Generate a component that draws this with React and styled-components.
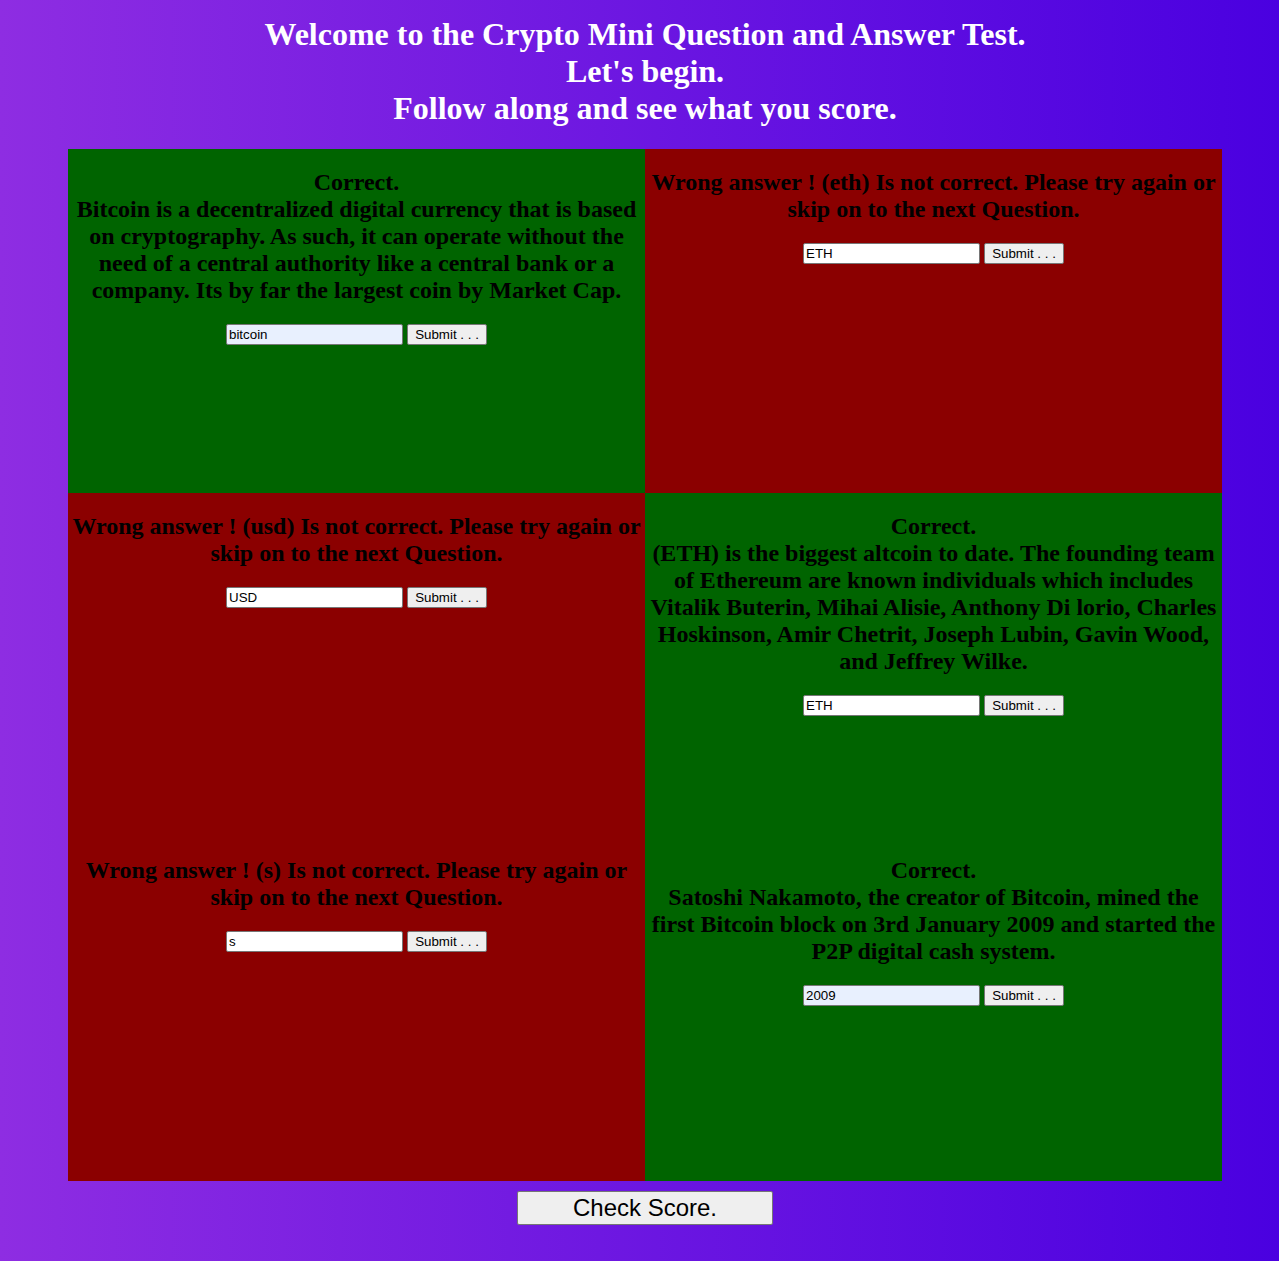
import React from "react";
import styled, { createGlobalStyle } from "styled-components";

const GlobalStyle = createGlobalStyle`
  html, body {
    margin: 0;
    padding: 0;
  }
  body {
    min-height: 1261px;
    background: linear-gradient(to right, #8e2de2, #4a00e0);
    font-family: "Liberation Serif", "Times New Roman", serif;
  }
`;

const Page = styled.div`
  padding-left: 11px;
  padding-top: 16px;
  padding-bottom: 36px;
  display: flex;
  flex-direction: column;
  align-items: center;
`;

const Title = styled.h1`
  margin: 0 0 21.6px;
  font-size: 32px;
  font-weight: bold;
  line-height: normal;
  color: #ffffff;
  text-align: center;
`;

const Grid = styled.div`
  width: 1154px;
  display: grid;
  grid-template-columns: 1fr 1fr;
  grid-auto-rows: 344px;
`;

const Cell = styled.div`
  background: ${(p) => (p.$ok ? "#006400" : "#8b0000")};
  display: flex;
  flex-direction: column;
  align-items: center;
  padding: 0 4px;
  overflow: hidden;
`;

const Message = styled.h2`
  margin: 20px 0 20.5px;
  font-size: 24px;
  font-weight: bold;
  line-height: normal;
  color: #000000;
  text-align: center;
`;

const Form = styled.form`
  display: flex;
  align-items: center;
  gap: 4px;
`;

const AnswerInput = styled.input`
  box-sizing: border-box;
  width: 177px;
  height: 21px;
  font-family: "Liberation Sans", Arial, sans-serif;
  font-size: 13.333px;
  padding: 1px 2px;
  border: 1px solid #767676;
  border-radius: 2px;
  color: #000;
  background-color: ${(p) => (p.$filled ? "#e8f0fe" : "#ffffff")};
`;

const SubmitButton = styled.button`
  box-sizing: border-box;
  width: 80px;
  height: 21px;
  font-family: "Liberation Sans", Arial, sans-serif;
  font-size: 13.333px;
  padding: 1px 6px;
  border: 1px solid #767676;
  border-radius: 2px;
  background: #efefef;
  color: #000;
`;

const ScoreButton = styled.button`
  box-sizing: border-box;
  margin-top: 10px;
  width: 256px;
  height: 34px;
  font-family: "Liberation Sans", Arial, sans-serif;
  font-size: 24px;
  padding: 1px 6px;
  border: 1px solid #767676;
  border-radius: 2px;
  background: #efefef;
  color: #000;
`;

const questions = [
  {
    ok: true,
    value: "bitcoin",
    filled: true,
    text: "Bitcoin is a decentralized digital currency that is based on cryptography. As such, it can operate without the need of a central authority like a central bank or a company. Its by far the largest coin by Market Cap.",
  },
  {
    ok: false,
    value: "ETH",
    text: "Wrong answer ! (eth) Is not correct. Please try again or skip on to the next Question.",
  },
  {
    ok: false,
    value: "USD",
    text: "Wrong answer ! (usd) Is not correct. Please try again or skip on to the next Question.",
  },
  {
    ok: true,
    value: "ETH",
    text: "(ETH) is the biggest altcoin to date. The founding team of Ethereum are known individuals which includes Vitalik Buterin, Mihai Alisie, Anthony Di lorio, Charles Hoskinson, Amir Chetrit, Joseph Lubin, Gavin Wood, and Jeffrey Wilke.",
  },
  {
    ok: false,
    value: "s",
    text: "Wrong answer ! (s) Is not correct. Please try again or skip on to the next Question.",
  },
  {
    ok: true,
    value: "2009",
    filled: true,
    text: "Satoshi Nakamoto, the creator of Bitcoin, mined the first Bitcoin block on 3rd January 2009 and started the P2P digital cash system.",
  },
];

export default function App() {
  return (
    <>
      <GlobalStyle />
      <Page>
        <Title>
          Welcome to the Crypto Mini Question and Answer Test.
          <br />
          Let's begin.
          <br />
          Follow along and see what you score.
        </Title>
        <Grid>
          {questions.map((q, i) => (
            <Cell key={i} $ok={q.ok}>
              <Message>
                {q.ok ? (
                  <>
                    Correct.
                    <br />
                    {q.text}
                  </>
                ) : (
                  q.text
                )}
              </Message>
              <Form onSubmit={(e) => e.preventDefault()}>
                <AnswerInput type="text" defaultValue={q.value} $filled={q.filled} />
                <SubmitButton type="submit">Submit . . .</SubmitButton>
              </Form>
            </Cell>
          ))}
        </Grid>
        <ScoreButton type="button">Check Score.</ScoreButton>
      </Page>
    </>
  );
}
